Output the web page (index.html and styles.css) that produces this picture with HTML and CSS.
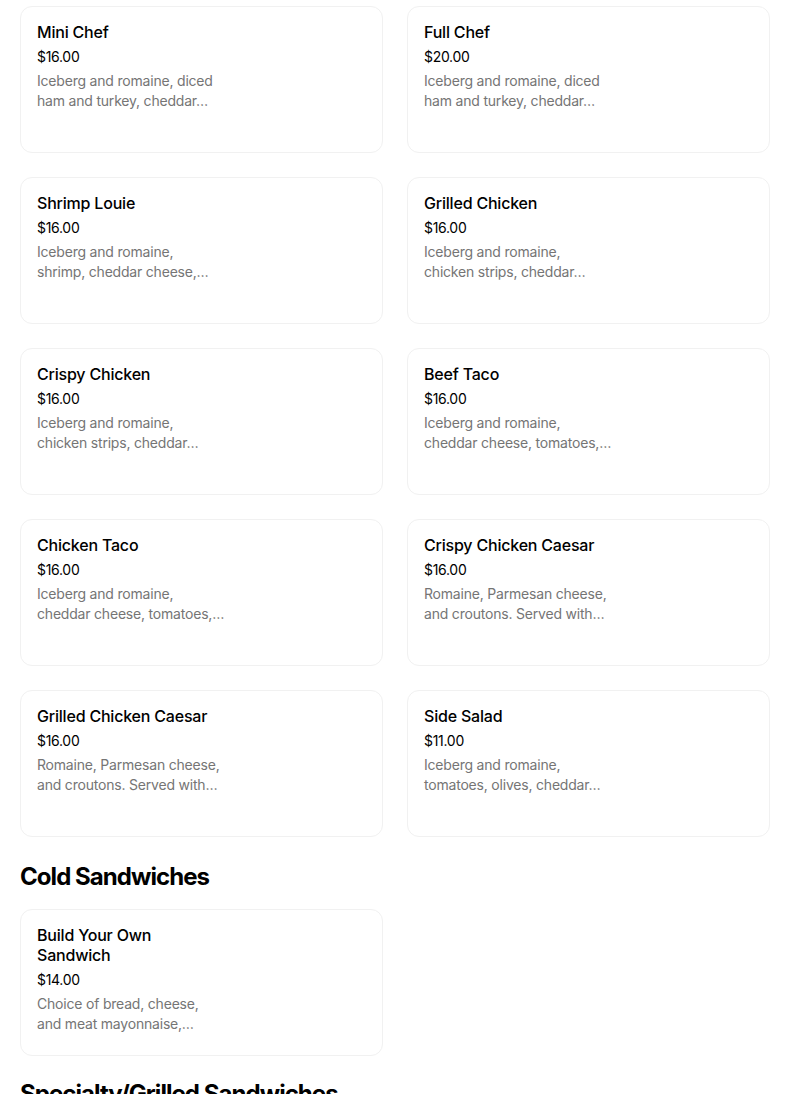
FILE: index.html
```html
<!DOCTYPE html>
<html lang="en">
<head>
<meta charset="utf-8">
<title>Menu</title>
<link rel="stylesheet" href="styles.css">
</head>
<body>
<main class="page">
  <section class="section">
    <div class="grid">
      <div class="card">
        <div class="title">Mini Chef</div>
        <div class="price">$16.00</div>
        <div class="desc"><span class="ln">Iceberg and romaine, diced</span><span class="ln">ham and turkey, cheddar…</span></div>
      </div>
      <div class="card">
        <div class="title">Full Chef</div>
        <div class="price">$20.00</div>
        <div class="desc"><span class="ln">Iceberg and romaine, diced</span><span class="ln">ham and turkey, cheddar…</span></div>
      </div>
      <div class="card">
        <div class="title">Shrimp Louie</div>
        <div class="price">$16.00</div>
        <div class="desc"><span class="ln">Iceberg and romaine,</span><span class="ln">shrimp, cheddar cheese,…</span></div>
      </div>
      <div class="card">
        <div class="title">Grilled Chicken</div>
        <div class="price">$16.00</div>
        <div class="desc"><span class="ln">Iceberg and romaine,</span><span class="ln">chicken strips, cheddar…</span></div>
      </div>
      <div class="card">
        <div class="title">Crispy Chicken</div>
        <div class="price">$16.00</div>
        <div class="desc"><span class="ln">Iceberg and romaine,</span><span class="ln">chicken strips, cheddar…</span></div>
      </div>
      <div class="card">
        <div class="title">Beef Taco</div>
        <div class="price">$16.00</div>
        <div class="desc"><span class="ln">Iceberg and romaine,</span><span class="ln">cheddar cheese, tomatoes,…</span></div>
      </div>
      <div class="card">
        <div class="title">Chicken Taco</div>
        <div class="price">$16.00</div>
        <div class="desc"><span class="ln">Iceberg and romaine,</span><span class="ln">cheddar cheese, tomatoes,…</span></div>
      </div>
      <div class="card">
        <div class="title">Crispy Chicken Caesar</div>
        <div class="price">$16.00</div>
        <div class="desc"><span class="ln">Romaine, Parmesan cheese,</span><span class="ln">and croutons. Served with…</span></div>
      </div>
      <div class="card">
        <div class="title">Grilled Chicken Caesar</div>
        <div class="price">$16.00</div>
        <div class="desc"><span class="ln">Romaine, Parmesan cheese,</span><span class="ln">and croutons. Served with…</span></div>
      </div>
      <div class="card">
        <div class="title">Side Salad</div>
        <div class="price">$11.00</div>
        <div class="desc"><span class="ln">Iceberg and romaine,</span><span class="ln">tomatoes, olives, cheddar…</span></div>
      </div>
    </div>
  </section>

  <section class="section">
    <h2 class="heading">Cold Sandwiches</h2>
    <div class="grid">
      <div class="card">
        <div class="title"><span class="ln">Build Your Own</span><span class="ln">Sandwich</span></div>
        <div class="price">$14.00</div>
        <div class="desc"><span class="ln">Choice of bread, cheese,</span><span class="ln">and meat mayonnaise,…</span></div>
      </div>
    </div>
  </section>

  <section class="section">
    <h2 class="heading heading-tight">Specialty/Grilled Sandwiches</h2>
  </section>
</main>
</body>
</html>
```

FILE: styles.css
```css
* { box-sizing: border-box; }

html, body {
  margin: 0;
  padding: 0;
  background: #ffffff;
}

body {
  font-family: Inter, "Noto Sans", "Liberation Sans", sans-serif;
  color: #000000;
  overflow: hidden;
}

.page {
  width: 750px;
  margin-left: 20px;
  padding-top: 6px;
}

.section {
  display: flex;
  flex-direction: column;
}

.grid {
  display: grid;
  grid-template-columns: 363px 363px;
  column-gap: 24px;
  row-gap: 24px;
}

.card {
  height: 147px;
  border: 1px solid #f1f1f1;
  border-radius: 12px;
  padding: 15px 16px 0 16px;
  display: flex;
  flex-direction: column;
  gap: 4px;
}

.title {
  font-size: 16px;
  line-height: 20px;
  font-weight: 500;
  letter-spacing: -0.2px;
  color: #000000;
}

.price {
  font-size: 14px;
  line-height: 20px;
  font-weight: 400;
  letter-spacing: -0.3px;
  color: #000000;
  margin-top: 1px;
}

.desc {
  font-size: 14px;
  line-height: 20px;
  font-weight: 400;
  color: #757575;
  letter-spacing: -0.2px;
}

.ln {
  display: block;
  white-space: nowrap;
}

.heading {
  margin: 24px 0 16px 0;
  font-size: 24px;
  line-height: 32px;
  font-weight: 700;
  letter-spacing: -0.95px;
}

.heading-tight {
  margin-top: 22px;
}
```
